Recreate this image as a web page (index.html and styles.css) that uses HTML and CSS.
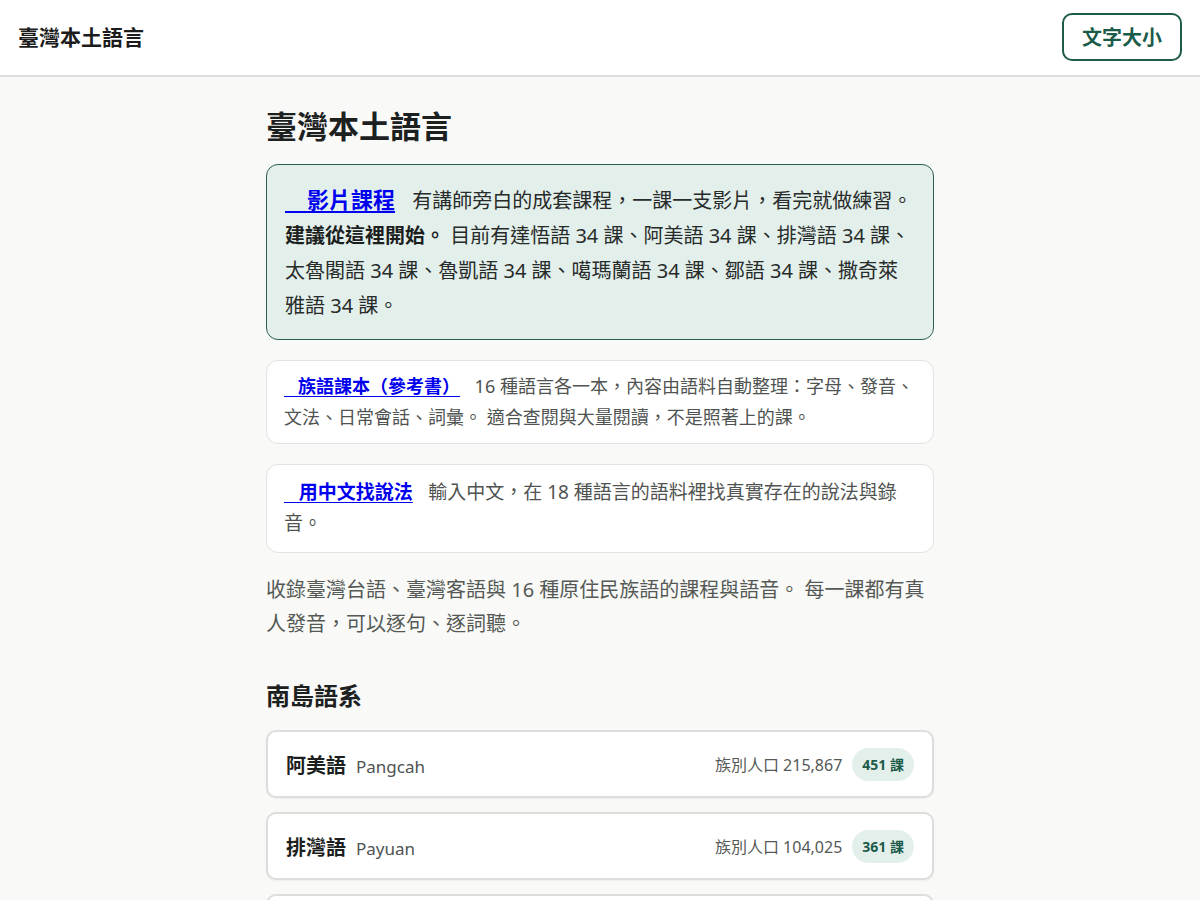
FILE: index.html
```html
<!DOCTYPE html>
<html lang="zh-Hant">
<head>
<meta charset="utf-8">
<title>臺灣本土語言</title>
<link rel="stylesheet" href="styles.css">
</head>
<body>
<header class="topbar">
  <div class="brand">臺灣本土語言</div>
  <button class="font-btn" type="button">文字大小</button>
</header>
<main class="page">
  <h1 class="title">臺灣本土語言</h1>

  <section class="card card-featured">
    <p><a class="card-link" href="#">&#x2003;影片課程</a> 有講師旁白的成套課程，一課一支影片，看完就做練習。 <strong>建議從這裡開始。</strong> 目前有達悟語 34 課、阿美語 34 課、排灣語 34 課、太魯閣語 34 課、魯凱語 34 課、噶瑪蘭語 34 課、鄒語 34 課、撒奇萊雅語 34 課。</p>
  </section>

  <section class="card card-plain">
    <p><a class="card-link" href="#">&nbsp;&nbsp;&nbsp;族語課本（參考書）</a> 16 種語言各一本，內容由語料自動整理：字母、發音、文法、日常會話、詞彙。 適合查閱與大量閱讀，不是照著上的課。</p>
  </section>

  <section class="card card-plain card-search">
    <p><a class="card-link" href="#">&nbsp;&nbsp;&nbsp;用中文找說法</a> 輸入中文，在 18 種語言的語料裡找真實存在的說法與錄音。</p>
  </section>

  <p class="intro">收錄臺灣台語、臺灣客語與 16 種原住民族語的課程與語音。 每一課都有真人發音，可以逐句、逐詞聽。</p>

  <h2 class="group-title">南島語系</h2>

  <ul class="lang-list">
    <li class="lang-card">
      <div class="lang-name"><span class="zh">阿美語</span><span class="native">Pangcah</span></div>
      <div class="lang-meta"><span class="pop">族別人口 215,867</span><span class="badge">451 課</span></div>
    </li>
    <li class="lang-card">
      <div class="lang-name"><span class="zh">排灣語</span><span class="native">Payuan</span></div>
      <div class="lang-meta"><span class="pop">族別人口 104,025</span><span class="badge">361 課</span></div>
    </li>
    <li class="lang-card">
      <div class="lang-name"><span class="zh">泰雅語</span><span class="native">Tayal</span></div>
      <div class="lang-meta"><span class="pop">族別人口 95,620</span><span class="badge">300 課</span></div>
    </li>
  </ul>
</main>
</body>
</html>
```

FILE: styles.css
```css
* { box-sizing: border-box; }

html, body {
  margin: 0;
  padding: 0;
}

body {
  background: #f9f9f7;
  color: #1f2422;
  font-family: "Noto Sans", "Noto Sans CJK TC", sans-serif;
}

.topbar {
  height: 77px;
  background: #ffffff;
  border-bottom: 2px solid #dedede;
  display: flex;
  align-items: center;
  justify-content: space-between;
  padding: 0 18px;
}

.brand {
  font-size: 21px;
  font-weight: 700;
  color: #1c1c1c;
  margin-top: -3px;
}

.font-btn {
  font-family: "Noto Sans", "Noto Sans CJK TC", sans-serif;
  font-size: 20px;
  font-weight: 700;
  color: #1b5b49;
  background: #ffffff;
  border: 2px solid #1d5c4a;
  border-radius: 10px;
  height: 48px;
  width: 120px;
  padding: 0;
  margin-top: -2px;
}

.page {
  width: 668px;
  margin: 0 auto;
  padding-top: 27px;
}

.title {
  font-size: 31px;
  font-weight: 700;
  line-height: 44px;
  margin: 0 0 16px;
  color: #1c211f;
}

.card {
  border-radius: 12px;
  margin-bottom: 20px;
}

.card p { margin: 0; }

.card-featured {
  background: #e3efeb;
  border: 1px solid #2c5f4d;
  padding: 17px 18px 16px;
  font-size: 20px;
  line-height: 35px;
  color: #272b29;
}

.card-featured .card-link {
  font-size: 22px;
}

.card-featured strong {
  font-weight: 700;
  color: #1c1f1e;
}

.card-link {
  color: #0000ee;
  font-weight: 700;
  text-decoration: underline;
  text-underline-offset: 3px;
  margin-right: 0.55em;
}

.card-plain {
  background: #ffffff;
  border: 1px solid #e2e2e0;
  padding: 10px 17px 11px;
  font-size: 18px;
  line-height: 30.5px;
  color: #4f5351;
}

.card-search {
  font-size: 19px;
  line-height: 31px;
  padding: 12px 15px 13px 17px;
}

.intro {
  font-size: 20px;
  line-height: 34px;
  color: #555956;
  margin: 19px 0 0;
}

.group-title {
  font-size: 24px;
  font-weight: 700;
  line-height: 34px;
  margin: 38px 0 17px;
  color: #1c211f;
}

.lang-list {
  list-style: none;
  margin: 0;
  padding: 0;
  display: flex;
  flex-direction: column;
  gap: 14px;
}

.lang-card {
  background: #ffffff;
  border: 2px solid #dddddb;
  border-radius: 10px;
  height: 68px;
  padding: 0 18px;
  display: flex;
  align-items: center;
  justify-content: space-between;
  box-shadow: 0 1px 2px rgba(0,0,0,0.05);
}

.lang-name {
  display: flex;
  align-items: baseline;
  gap: 10px;
}

.zh {
  font-size: 20px;
  font-weight: 700;
  color: #1c1f1e;
}

.native {
  font-size: 17px;
  color: #4f5351;
}

.lang-meta {
  display: flex;
  align-items: center;
  gap: 10px;
}

.pop {
  font-size: 16px;
  color: #555956;
}

.badge {
  background: #e3efeb;
  color: #1b5b49;
  font-size: 14px;
  font-weight: 700;
  height: 33px;
  padding: 0 10px;
  border-radius: 17px;
  display: inline-flex;
  align-items: center;
}
```
